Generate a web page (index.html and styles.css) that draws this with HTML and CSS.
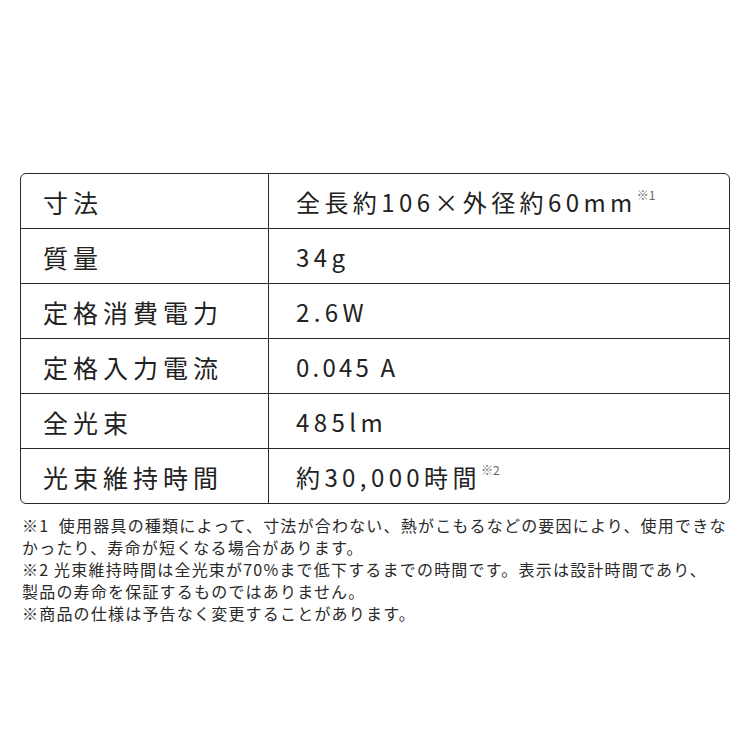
FILE: index.html
```html
<!DOCTYPE html>
<html lang="ja">
<head>
<meta charset="utf-8">
<link rel="stylesheet" href="styles.css">
</head>
<body>
<div class="page">
  <div class="spec">
    <div class="row"><div class="label">寸法</div><div class="value">全長約106×外径約60mm<span class="note">※1</span></div></div>
    <div class="row"><div class="label">質量</div><div class="value">34g</div></div>
    <div class="row"><div class="label">定格消費電力</div><div class="value">2.6W</div></div>
    <div class="row"><div class="label">定格入力電流</div><div class="value tight">0.045 A</div></div>
    <div class="row"><div class="label">全光束</div><div class="value">485lm</div></div>
    <div class="row"><div class="label">光束維持時間</div><div class="value">約30,000時間<span class="note">※2</span></div></div>
  </div>
  <div class="notes">
    <p class="line">※1&nbsp; 使用器具の種類によって、寸法が合わない、熱がこもるなどの要因により、使用できな</p>
    <p class="line">かったり、寿命が短くなる場合があります。</p>
    <p class="line">※2 光束維持時間は全光束が70%まで低下するまでの時間です。表示は設計時間であり、</p>
    <p class="line">製品の寿命を保証するものではありません。</p>
    <p class="line">※商品の仕様は予告なく変更することがあります。</p>
  </div>
</div>
</body>
</html>
```

FILE: styles.css
```css
html, body {
  margin: 0;
  padding: 0;
  background: #fff;
}
body {
  font-family: "Noto Sans CJK JP", "Noto Sans", sans-serif;
  color: #222;
}
.page {
  width: 750px;
  height: 750px;
  padding: 173px 20px 0 20px;
  box-sizing: border-box;
}
.spec {
  border: 1.5px solid #2a2a2a;
  border-radius: 6px;
  overflow: hidden;
}
.row {
  display: grid;
  grid-template-columns: 248px 1fr;
  height: 54px;
  border-bottom: 1px solid #2a2a2a;
}
.row:last-child {
  border-bottom: none;
}
.label, .value {
  display: flex;
  align-items: center;
  font-weight: 400;
  line-height: 1;
  padding-top: 2px;
  box-sizing: border-box;
}
.label {
  font-size: 25px;
  letter-spacing: 5px;
  padding-left: 22px;
  border-right: 1px solid #2a2a2a;
}
.value {
  font-size: 24px;
  letter-spacing: 4.4px;
  padding-left: 27px;
}
.value.tight {
  letter-spacing: 3.2px;
}
.note {
  font-size: 12px;
  letter-spacing: 0;
  color: #666;
  align-self: flex-start;
  margin-top: 13px;
  margin-left: 0;
}
.notes {
  margin-top: 10px;
  padding-left: 2px;
}
.line {
  margin: 0;
  font-size: 16px;
  line-height: 22px;
  letter-spacing: 1.2px;
  white-space: nowrap;
  color: #2a2a2a;
}
```
